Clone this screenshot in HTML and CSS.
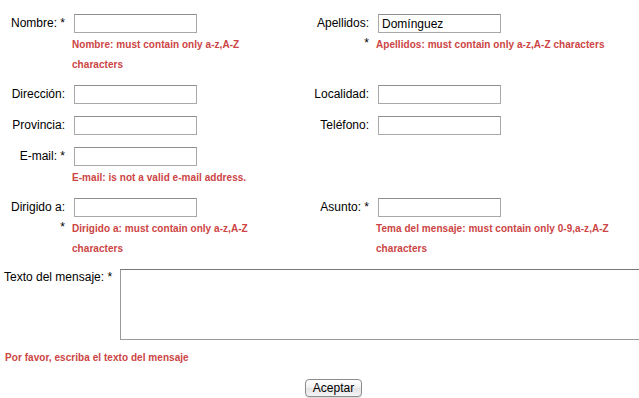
FILE: index.html
```html
<!DOCTYPE html>
<html lang="es">
<head>
    <meta charset="UTF-8">
    <meta name="viewport" content="width=device-width, initial-scale=1.0">
    <title>Contacto</title>
    <link rel="stylesheet" href="styles.css">
</head>
<body>
    <form class="contact" action="#" method="post">
        <div class="grid">
            <label class="lbl lbl-left">Nombre: *</label>
            <div class="field">
                <input type="text" class="text" name="nombre">
                <p class="error">Nombre: must contain only a-z,A-Z characters</p>
            </div>
            <label class="lbl lbl-right">Apellidos: *</label>
            <div class="field">
                <input type="text" class="text" name="apellidos" value="Domínguez">
                <p class="error">Apellidos: must contain only a-z,A-Z characters</p>
            </div>

            <label class="lbl lbl-left">Dirección:</label>
            <div class="field"><input type="text" class="text" name="direccion"></div>
            <label class="lbl lbl-right">Localidad:</label>
            <div class="field"><input type="text" class="text" name="localidad"></div>

            <label class="lbl lbl-left">Provincia:</label>
            <div class="field"><input type="text" class="text" name="provincia"></div>
            <label class="lbl lbl-right">Teléfono:</label>
            <div class="field"><input type="text" class="text" name="telefono"></div>

            <label class="lbl lbl-left">E-mail: *</label>
            <div class="field">
                <input type="text" class="text" name="email">
                <p class="error">E-mail: is not a valid e-mail address.</p>
            </div>

            <label class="lbl lbl-left">Dirigido a: *</label>
            <div class="field">
                <input type="text" class="text" name="dirigido">
                <p class="error">Dirigido a: must contain only a-z,A-Z characters</p>
            </div>
            <label class="lbl lbl-right">Asunto: *</label>
            <div class="field">
                <input type="text" class="text" name="asunto">
                <p class="error">Tema del mensaje: must contain only 0-9,a-z,A-Z characters</p>
            </div>
        </div>

        <div class="message">
            <label class="lbl-msg">Texto del mensaje: *</label>
            <textarea name="mensaje"></textarea>
        </div>
        <p class="error">Por favor, escriba el texto del mensaje</p>

        <div class="actions">
            <button type="submit">Aceptar</button>
        </div>
    </form>
</body>
</html>
```

FILE: styles.css
```css
body {
    margin: 0;
    overflow-x: hidden;
    font-family: "Liberation Sans", Arial, Helvetica, sans-serif;
    font-size: 12px;
    line-height: 20px;
    color: #000;
    background: #fff;
}

.contact {
    width: 659px;
    padding: 12px 0 0 4px;
}

.grid {
    display: grid;
    grid-template-columns: 57px 200px 90px 255px;
    column-gap: 7px;
    row-gap: 8px;
    padding-left: 4px;
    align-items: start;
}

.lbl {
    padding-top: 1px;
    text-align: right;
}
.lbl-left {
    grid-column: 1;
}
.lbl-right {
    padding-left: 33px;
}

.text {
    display: block;
    box-sizing: border-box;
    width: 123px;
    height: 19px;
    margin: 2px;
    padding: 0 3px;
    border: 1px solid #a9a9a9;
    border-top-color: #8f8f8f;
    font-family: inherit;
    font-size: 12px;
    color: #000;
    outline: none;
}

.error {
    margin: 0;
    font-size: 10px;
    font-weight: bold;
    line-height: 20px;
    letter-spacing: 0.05px;
    color: #cc4444;
}

.message {
    display: flex;
    align-items: flex-start;
    margin-top: 8px;
}
.lbl-msg {
    margin-right: 8px;
    white-space: nowrap;
}
textarea {
    box-sizing: border-box;
    width: 547px;
    height: 71px;
    margin: 2px 0 2px 0;
    border: 1px solid #9a9a9a;
    border-top-color: #777;
    resize: none;
    outline: none;
    font-family: inherit;
    font-size: 12px;
}

.message + .error {
    margin-top: 6px;
    padding-left: 1px;
}

.actions {
    margin-top: 10px;
    text-align: center;
}
button {
    height: 18px;
    padding: 0 7px;
    border: 1px solid #8c8c8c;
    border-radius: 4px;
    background: linear-gradient(#ffffff, #f1f1f1 50%, #e3e3e3 51%, #f4f4f4);
    box-shadow: 0 1px 1px rgba(0, 0, 0, 0.15);
    font-family: inherit;
    font-size: 12px;
    line-height: 16px;
    color: #000;
}
```
